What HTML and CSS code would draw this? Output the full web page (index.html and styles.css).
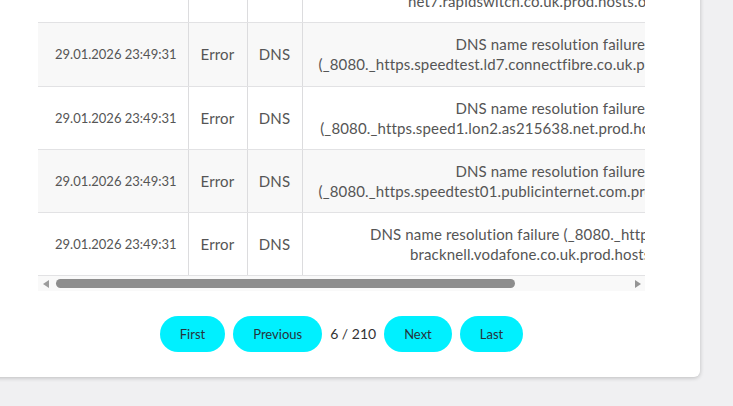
FILE: index.html
```html
<!DOCTYPE html>
<html>
<head>
<meta charset="utf-8">
<link rel="stylesheet" href="styles.css">
</head>
<body>
<div class="card">
  <div class="scroller">
    <table class="log">
      <colgroup>
        <col class="c-date"><col class="c-level"><col class="c-type"><col class="c-msg">
      </colgroup>
      <tbody>
        <tr>
          <td class="date">29.01.2026 23:49:31</td><td>Error</td><td>DNS</td>
          <td class="msg"><span class="ln">DNS name resolution failure</span><span class="ln">(_8080._https.speedtest.lon1.net7.rapidswitch.co.uk.prod.hosts.ooklaserver.net.lon1</span><span class="ln">net7.rapidswitch.co.uk.prod.hosts.ooklase)</span></td>
        </tr>
        <tr class="alt">
          <td class="date">29.01.2026 23:49:31</td><td>Error</td><td>DNS</td>
          <td class="msg"><span class="ln">DNS name resolution failure</span><span class="ln">(_8080._https.speedtest.ld7.connectfibre.co.uk.prod.hosts.ooklaserver.net)</span></td>
        </tr>
        <tr>
          <td class="date">29.01.2026 23:49:31</td><td>Error</td><td>DNS</td>
          <td class="msg"><span class="ln">DNS name resolution failure</span><span class="ln">(_8080._https.speed1.lon2.as215638.net.prod.hosts.ooklaserver.net)</span></td>
        </tr>
        <tr class="alt">
          <td class="date">29.01.2026 23:49:31</td><td>Error</td><td>DNS</td>
          <td class="msg"><span class="ln">DNS name resolution failure</span><span class="ln">(_8080._https.speedtest01.publicinternet.com.prod.hosts.ooklaserver.net)</span></td>
        </tr>
        <tr>
          <td class="date">29.01.2026 23:49:31</td><td>Error</td><td>DNS</td>
          <td class="msg"><span class="ln">DNS name resolution failure (_8080._https.speedtest-</span><span class="ln">bracknell.vodafone.co.uk.prod.hosts.ookla</span></td>
        </tr>
      </tbody>
    </table>
  </div>
  <div class="hscroll">
    <span class="arrow left"></span>
    <span class="thumb"></span>
    <span class="arrow right"></span>
  </div>
  <div class="pager">
    <button class="pbtn">First</button>
    <button class="pbtn">Previous</button>
    <span class="pinfo">6 / 210</span>
    <button class="pbtn">Next</button>
    <button class="pbtn">Last</button>
  </div>
</div>
</body>
</html>
```
FILE: styles.css
```css
html, body {
  margin: 0;
  padding: 0;
}
body {
  background: #f0f0f2;
  font-family: Lato, "Noto Sans", sans-serif;
  color: #555;
  width: 733px;
  height: 406px;
  overflow: hidden;
}
.card {
  box-sizing: border-box;
  width: 717px;
  margin-left: -17px;
  margin-top: -60px;
  padding: 0 55px 25px 55px;
  background: #fff;
  border-radius: 6px;
  box-shadow: 0 1px 4px rgba(0, 0, 0, 0.22);
}
.scroller {
  width: 607px;
  overflow: hidden;
}
.log {
  width: 760px;
  border-collapse: collapse;
  table-layout: fixed;
  font-size: 15px;
  letter-spacing: 0.15px;
}
.c-date { width: 150px; }
.c-level { width: 59px; }
.c-type { width: 55px; }
.c-msg { width: 496px; }
.log td {
  padding: 11.125px 4px;
  line-height: 20px;
  text-align: center;
  vertical-align: middle;
  border-bottom: 1px solid #e2e2e4;
  border-right: 1px solid #dcdcde;
  white-space: nowrap;
  overflow: hidden;
}
.log td.msg {
  padding-left: 16px;
  padding-right: 16px;
  border-right: none;
}
.log td.date {
  font-size: 13px;
  letter-spacing: 0;
  padding-left: 8px;
  padding-right: 2px;
}
.log tr.alt td {
  background: #f8f8f8;
}
.ln {
  display: block;
  white-space: nowrap;
}
.hscroll {
  width: 607px;
  height: 15px;
  background: #f9f9f9;
  display: flex;
  align-items: center;
}
.arrow {
  width: 0;
  height: 0;
  border-top: 4px solid transparent;
  border-bottom: 4px solid transparent;
}
.arrow.left {
  margin-left: 5px;
  border-right: 6px solid #9c9c9c;
}
.arrow.right {
  margin-left: auto;
  margin-right: 4px;
  border-left: 6px solid #959595;
}
.thumb {
  margin-left: 7px;
  width: 459px;
  height: 9px;
  border-radius: 5px;
  background: #8d8d8d;
}
.pager {
  width: 607px;
  display: flex;
  justify-content: center;
  align-items: center;
  gap: 8px;
  padding-top: 25px;
}
.pbtn {
  height: 36px;
  padding: 0 20px;
  border: none;
  border-radius: 18px;
  background: #00f0ff;
  color: #27343b;
  font-family: Lato, "Noto Sans", sans-serif;
  font-size: 13px;
}
.pinfo {
  font-size: 14px;
  color: #333;
  margin-top: -2px;
}
```
